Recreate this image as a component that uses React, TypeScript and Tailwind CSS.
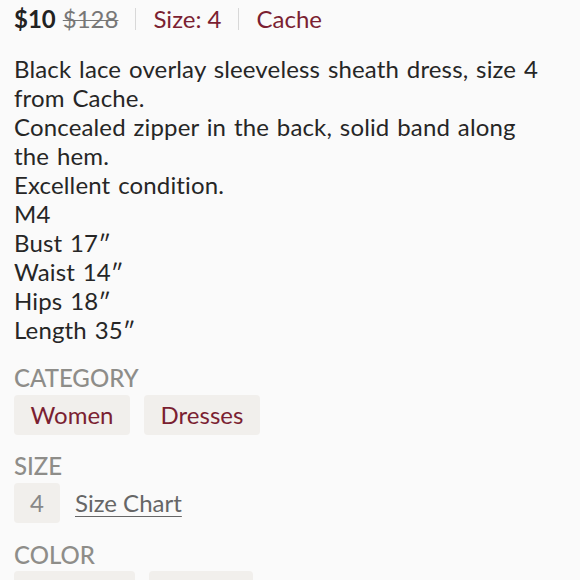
const font = { fontFamily: "Lato, 'Noto Sans', sans-serif" }

function Label({ children }: { children: string }) {
  return (
    <div className="text-[24px] leading-[28px] font-medium uppercase text-[#8e8d89]">
      {children}
    </div>
  )
}

function Chip({ children, className = "" }: { children: React.ReactNode; className?: string }) {
  return (
    <span
      className={`flex h-10 items-center justify-center rounded-[4px] bg-[#f1efec] text-[24px] ${className}`}
    >
      {children}
    </span>
  )
}

export default function App() {
  return (
    <div className="h-[580px] w-[580px] overflow-hidden bg-[#fafafa] px-[14px] pt-[2px]" style={font}>
      <div className="flex items-center text-[24px] leading-[34px]">
        <span className="font-bold text-[#222]">$10</span>
        <span className="ml-[7px] text-[#777] line-through decoration-1">$128</span>
        <span className="mx-[17px] h-[22px] w-px bg-[#d8d8d8]" />
        <span className="text-[#7b1f32]">Size: 4</span>
        <span className="mx-[17px] h-[22px] w-px bg-[#d8d8d8]" />
        <span className="text-[#7b1f32]">Cache</span>
      </div>

      <div className="mt-[18px] w-[536px] text-[24px] leading-[29px] tracking-[0.15px] text-[#262626] [word-spacing:1.5px]">
        <p>Black lace overlay sleeveless sheath dress, size 4 from Cache.</p>
        <p>Concealed zipper in the back, solid band along the hem.</p>
        <p>Excellent condition.</p>
        <p>M4</p>
        <p>Bust 17″</p>
        <p>Waist 14″</p>
        <p>Hips 18″</p>
        <p>Length 35″</p>
      </div>

      <div className="mt-[20px]">
        <Label>Category</Label>
        <div className="mt-[3px] flex gap-[14px]">
          <Chip className="w-[116px] text-[#7b1f32]">Women</Chip>
          <Chip className="w-[116px] text-[#7b1f32]">Dresses</Chip>
        </div>
      </div>

      <div className="mt-[17px]">
        <Label>Size</Label>
        <div className="mt-[3px] flex items-center gap-[15px]">
          <Chip className="w-[46px] text-[#888]">4</Chip>
          <a href="#size-chart" className="text-[24px] text-[#666] underline underline-offset-[4px] decoration-1">
            Size Chart
          </a>
        </div>
      </div>

      <div className="mt-[18px]">
        <Label>Color</Label>
        <div className="mt-[2px] flex gap-[14px]">
          <Chip className="w-[121px]">&nbsp;</Chip>
          <Chip className="w-[104px]">&nbsp;</Chip>
        </div>
      </div>
    </div>
  )
}
